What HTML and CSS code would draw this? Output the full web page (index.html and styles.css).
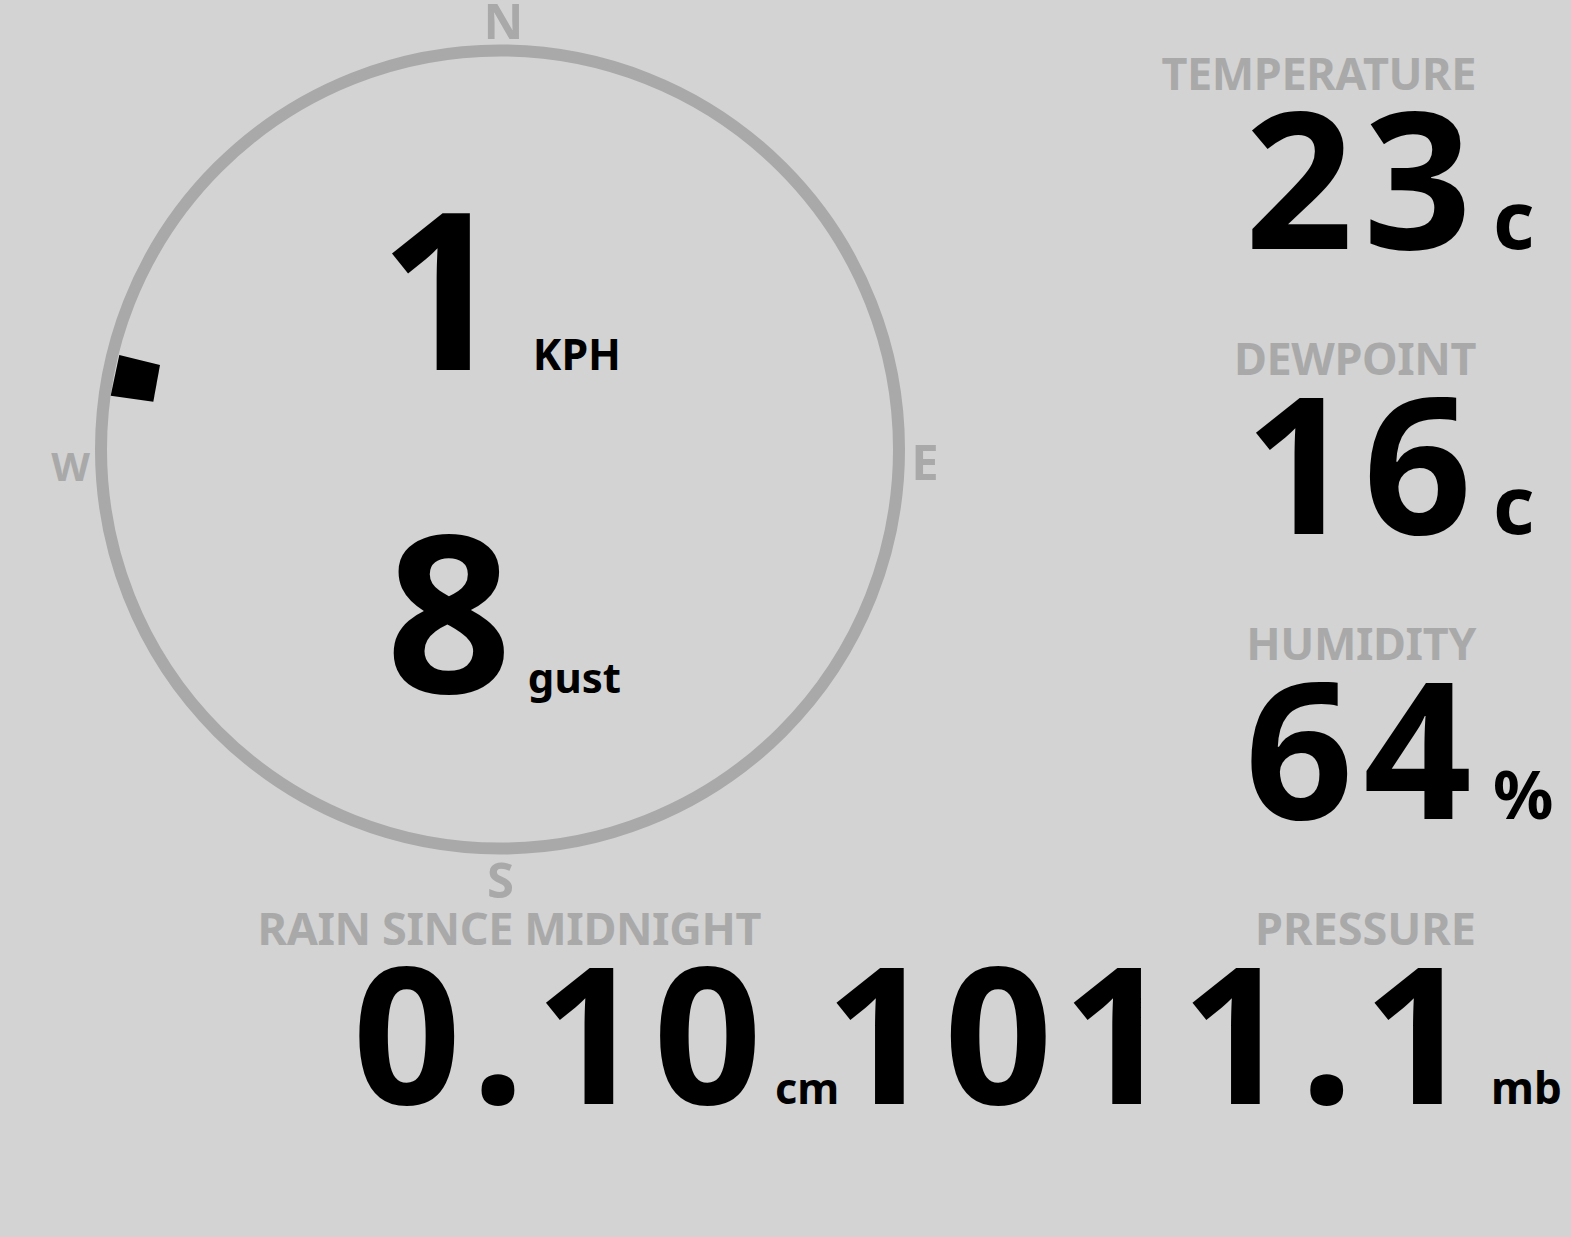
FILE: index.html
```html
<!DOCTYPE html>
<html lang="en">
<head>
  <meta charset="UTF-8">
  <title>Weather Station</title>
  <link rel="stylesheet" href="styles.css">
</head>
<body>
  <div class="station">
    <div class="top">
      <div class="compass">
        <svg class="dial" viewBox="0 0 1000 905" width="1000" height="905">
          <circle cx="500" cy="449.5" r="399" fill="none" stroke="#a9a9a9" stroke-width="12"/>
          <text class="point" x="503.5" y="39">N</text>
          <text class="point" x="925" y="480">E</text>
          <text class="point" x="500.5" y="898">S</text>
          <text class="point west" x="70.5" y="481">W</text>
          <!-- wind direction -->
          <polygon points="119.3,355 160,365 153.3,401.7 110.7,395.7" fill="#000"/>
        </svg>
        <div class="wind">
          <div class="reading speed"><span class="value">1</span><span class="unit">KPH</span></div>
          <div class="reading gust"><span class="value">8</span><span class="unit">gust</span></div>
        </div>
      </div>

      <div class="stats">
        <div class="stat">
          <div class="label">TEMPERATURE</div>
          <div class="reading"><span class="value">23</span><span class="unit">c</span></div>
        </div>
        <div class="stat">
          <div class="label">DEWPOINT</div>
          <div class="reading"><span class="value">16</span><span class="unit">c</span></div>
        </div>
        <div class="stat">
          <div class="label">HUMIDITY</div>
          <div class="reading"><span class="value">64</span><span class="unit pct">%</span></div>
        </div>
      </div>
    </div>

    <div class="bottom">
      <div class="stat rain">
        <div class="label">RAIN SINCE MIDNIGHT</div>
        <div class="reading"><span class="value">0.10</span><span class="unit small">cm</span></div>
      </div>
      <div class="stat pressure">
        <div class="label">PRESSURE</div>
        <div class="reading"><span class="value">1011.1</span><span class="unit small">mb</span></div>
      </div>
    </div>
  </div>
</body>
</html>
```

FILE: styles.css
```css
body {
  margin: 0;
  background: #d3d3d3;
  color: #000;
  font-family: 'Noto Sans', 'Open Sans', sans-serif;
  font-weight: 700;
}

.station {
  width: 1571px;
}

.top {
  display: flex;
  height: 905px;
}

/* compass dial with wind readings */
.compass {
  position: relative;
  width: 1000px;
  height: 905px;
  flex: none;
}

.dial {
  position: absolute;
  left: 0;
  top: 0;
}

.point {
  font: 700 49px 'Noto Sans', sans-serif;
  fill: #a9a9a9;
  text-anchor: middle;
}

.point.west {
  font-size: 40px;
}

.wind {
  position: relative;
  width: 621px;
  padding-top: 185px;
  display: flex;
  flex-direction: column;
  align-items: flex-end;
  gap: 123px;
}

.reading {
  display: flex;
  align-items: baseline;
}

.wind .value {
  font-size: 220px;
  line-height: 200px;
}

.wind .unit {
  font-size: 42px;
  line-height: 1;
  padding-left: 16px;
}

.speed .unit {
  font-size: 43px;
  padding-left: 28px;
}

/* right hand column */
.stats {
  flex: 1;
  padding-top: 50px;
  display: flex;
  flex-direction: column;
  align-items: flex-end;
}

.stat {
  display: flex;
  flex-direction: column;
  align-items: flex-end;
}

.stats .stat {
  height: 285px;
}

.label {
  color: #a9a9a9;
  font-size: 45px;
  line-height: 46px;
  letter-spacing: -0.4px;
  padding-right: 95px;
}

.pressure .label {
  letter-spacing: 0;
}

.stat .value {
  font-size: 190px;
  line-height: 160px;
  letter-spacing: 10px;
  margin-right: -6px;
}

.rain .value {
  margin-right: -11px;
}

.stat .unit {
  width: 95px;
  box-sizing: border-box;
  padding-left: 17px;
  font-size: 80px;
  line-height: 1;
}

.stat .unit.pct {
  font-size: 67px;
}

.stat .unit.small {
  font-size: 43px;
}

.pressure .unit.small {
  font-size: 44px;
  padding-left: 15px;
}

.bottom {
  display: flex;
}

.rain {
  width: 775px;
  flex: none;
}

.rain .label {
  padding-right: 14px;
}

.rain .unit {
  width: 14px;
  padding-left: 14px;
  white-space: nowrap;
}

.pressure {
  flex: 1;
}
```
